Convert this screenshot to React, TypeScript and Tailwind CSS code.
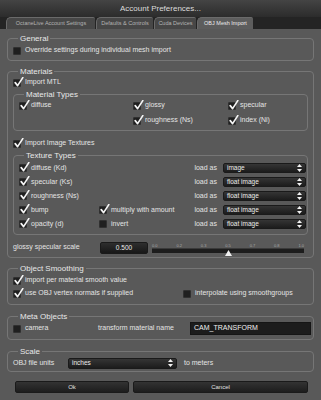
import React from 'react'

function Box({ checked }: { checked?: boolean }) {
  return (
    <span className="relative inline-block w-[8px] h-[8px] shrink-0 rounded-[1px] bg-[#1f1f1f] border border-[#303030]">
      {checked && (
        <svg className="absolute left-[0px] top-[-3px]" width="10" height="10" viewBox="0 0 10 10">
          <path d="M1.2 5.6 L3.6 8.6 L8.8 0.6" stroke="#f4f4f4" strokeWidth="1.7" fill="none" strokeLinecap="round" strokeLinejoin="round" />
        </svg>
      )}
    </span>
  )
}

function Check({ label, checked }: { label: string; checked?: boolean }) {
  return (
    <div className="flex items-center gap-[4px] h-[9px] text-[7px] text-[#e4e4e4] whitespace-nowrap">
      <Box checked={checked} />
      <span>{label}</span>
    </div>
  )
}

function Arrows() {
  return (
    <svg width="5" height="8" viewBox="0 0 5 8">
      <path d="M2.5 0 L5 3 L0 3 Z" fill="#f2f2f2" />
      <path d="M2.5 8 L5 5 L0 5 Z" fill="#f2f2f2" />
    </svg>
  )
}

function Select({ value, className }: { value: string; className: string }) {
  return (
    <div className={`flex items-center justify-between pl-[3px] pr-[3px] rounded-[2px] border border-[#1a1a1a] bg-gradient-to-b from-[#353535] to-[#1c1c1c] text-[6.5px] text-[#ececec] ${className}`}>
      <span>{value}</span>
      <Arrows />
    </div>
  )
}

function Group({ title, className, children }: { title: string; className?: string; children: React.ReactNode }) {
  return (
    <fieldset className={`border border-[#767676] rounded-[4px] pl-[5px] ${className ?? ''}`}>
      <legend className="ml-[5px] px-[2px] text-[8px] leading-[9px] text-[#e8e8e8]">{title}</legend>
      {children}
    </fieldset>
  )
}

const tabs = [
  { name: 'OctaneLive Account Settings', w: 'w-[89px]' },
  { name: 'Defaults & Controls', w: 'w-[57px]' },
  { name: 'Cuda Devices', w: 'w-[42px]' },
  { name: 'OBJ Mesh Import', w: 'w-[56px]', active: true },
]

const textures = [
  { label: 'diffuse (Kd)', load: 'image' },
  { label: 'specular (Ks)', load: 'float image' },
  { label: 'roughness (Ns)', load: 'float image' },
  { label: 'bump', load: 'float image', extra: 'multiply with amount', extraChecked: true },
  { label: 'opacity (d)', load: 'float image', extra: 'invert', extraChecked: false },
]

const ticks = ['0.0', '0.2', '0.3', '0.5', '0.7', '0.8', '1.0']

export default function App() {
  return (
    <div className="w-[321px] h-[400px] overflow-hidden bg-[#595959] flex flex-col" style={{ fontFamily: '"Liberation Sans", Arial, sans-serif' }}>
      {/* Title bar */}
      <div className="h-[17px] shrink-0 flex items-center justify-center bg-gradient-to-b from-[#444] to-[#2c2c2c] text-[8px] text-[#dcdcdc]">
        Account Preferences...
      </div>

      {/* Tabs */}
      <div className="h-[12px] shrink-0 flex items-end gap-[1px] pl-[6px] bg-[#242424]">
        {tabs.map(t => (
          <div
            key={t.name}
            className={`${t.w} h-[12px] flex items-center justify-center rounded-tl-[5px] rounded-tr-[2px] border-t border-l border-[#6a6a6a] text-[5.5px] whitespace-nowrap ${t.active ? 'bg-[#5d5d5d] text-[#ececec]' : 'bg-[#474747] text-[#b4b4b4]'}`}
          >
            {t.name}
          </div>
        ))}
      </div>

      {/* Body */}
      <div className="flex flex-col px-[7px]">
        <Group title="General" className="mt-[5px] pt-[3px] pb-[5px]">
          <Check label="Override settings during individual mesh import" />
        </Group>

        <Group title="Materials" className="mt-[6px] pt-[2px] pb-[3px] pr-[5px]">
          <Check label="Import MTL" checked />

          <Group title="Material Types" className="mt-[3px] pt-[2px] pb-[5px]">
            <div className="grid grid-cols-[114px_95px_1fr] gap-y-[6px]">
              <Check label="diffuse" checked />
              <Check label="glossy" checked />
              <Check label="specular" checked />
              <div />
              <Check label="roughness (Ns)" checked />
              <Check label="index (Ni)" checked />
            </div>
          </Group>

          <div className="mt-[8px]">
            <Check label="Import Image Textures" checked />
          </div>

          <Group title="Texture Types" className="mt-[3px] pt-[3px] pb-[5px] pr-[1px]">
            <div className="flex flex-col gap-[4px]">
              {textures.map(t => (
                <div key={t.label} className="flex items-center h-[10px]">
                  <div className="w-[80px]">
                    <Check label={t.label} checked />
                  </div>
                  <div className="flex-1">
                    {t.extra && <Check label={t.extra} checked={t.extraChecked} />}
                  </div>
                  <span className="text-[7px] text-[#e4e4e4] mr-[6px]">load as</span>
                  <Select value={t.load} className="w-[83px] h-[10px]" />
                </div>
              ))}
            </div>
          </Group>

          <div className="mt-[6px] flex items-center h-[13px]">
            <span className="w-[87px] text-[7px] text-[#e4e4e4]">glossy specular scale</span>
            <div className="w-[48px] h-[12px] flex items-center justify-center rounded-[2px] border border-[#1a1a1a] bg-gradient-to-b from-[#2e2e2e] to-[#181818] text-[6.5px] text-[#ececec]">
              0.500
            </div>
            <div className="ml-[4px] flex-1 flex flex-col mr-[4px]">
              <div className="flex justify-between text-[4px] leading-[5px] text-[#a8a8a8]">
                {ticks.map(t => (
                  <span key={t}>{t}</span>
                ))}
              </div>
              <div className="relative h-[5px] bg-[#1d1d1d] border-t border-[#3a3a3a]">
                <svg className="absolute left-[73px] top-[1px]" width="7" height="6" viewBox="0 0 7 6">
                  <path d="M3.5 0 L7 6 L0 6 Z" fill="#f0f0f0" />
                </svg>
              </div>
            </div>
          </div>
        </Group>

        <Group title="Object Smoothing" className="mt-[6px] pt-[3px] pb-[6px]">
          <div className="flex flex-col gap-[4px]">
            <Check label="import per material smooth value" checked />
            <div className="grid grid-cols-[170px_1fr]">
              <Check label="use OBJ vertex normals if supplied" checked />
              <Check label="interpolate using smoothgroups" />
            </div>
          </div>
        </Group>

        <Group title="Meta Objects" className="mt-[7px] pt-[1px] pb-[4px] pr-[2px]">
          <div className="flex items-center h-[13px]">
            <div className="w-[85px]">
              <Check label="camera" />
            </div>
            <span className="w-[92px] text-[7px] text-[#e4e4e4]">transform material name</span>
            <div className="flex-1 h-[13px] flex items-center pl-[3px] bg-[#1c1c1c] border border-[#151515] text-[7px] text-[#f0f0f0]">
              CAM_TRANSFORM
            </div>
          </div>
        </Group>

        <Group title="Scale" className="mt-[7px] pt-[1px] pb-[2px]">
          <div className="flex items-center h-[12px] text-[7px] text-[#e4e4e4]">
            <span className="w-[55px]">OBJ file units</span>
            <Select value="inches" className="w-[109px] h-[11px]" />
            <span className="ml-[7px]">to meters</span>
          </div>
        </Group>

        <div className="mt-[9px] flex gap-[4px] pl-[8px] pr-[6px]">
          <button className="w-[114px] h-[12px] rounded-[2px] border border-[#1a1a1a] bg-gradient-to-b from-[#333] to-[#1d1d1d] text-[6px] text-[#e0e0e0]">Ok</button>
          <button className="flex-1 h-[12px] rounded-[2px] border border-[#1a1a1a] bg-gradient-to-b from-[#333] to-[#1d1d1d] text-[6px] text-[#e0e0e0]">Cancel</button>
        </div>
      </div>
    </div>
  )
}
